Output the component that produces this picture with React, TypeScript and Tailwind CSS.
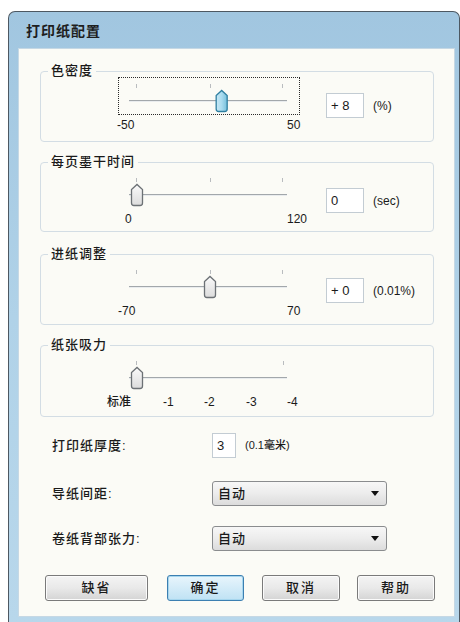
import React from "react";

type Tick = { text: string; x: number };

type SliderProps = {
  min: number;
  max: number;
  value: number;
  ticks: number[];
  labels: Tick[];
  focused?: boolean;
};

const TRACK_START = 18;
const TRACK_SPAN = 146;

const Slider = ({ min, max, value, ticks, labels, focused }: SliderProps) => {
  const cx = TRACK_START + ((value - min) / (max - min)) * TRACK_SPAN;
  const gradId = focused ? "thumbBlue" : "thumbGray";
  return (
    <div className="flex flex-col">
      <div
        className={
          "w-[182px] h-[38px] border " +
          (focused ? "border-dotted border-[#2a2a2a]" : "border-transparent")
        }
      >
        <svg width="180" height="36" viewBox="0 0 180 36">
          <defs>
            <linearGradient id="thumbBlue" x1="0" y1="0" x2="1" y2="0">
              <stop offset="0" stopColor="#c8e9f6" />
              <stop offset="0.5" stopColor="#a9dbef" />
              <stop offset="1" stopColor="#76c0dc" />
            </linearGradient>
            <linearGradient id="thumbGray" x1="0" y1="0" x2="0" y2="1">
              <stop offset="0" stopColor="#fafafa" />
              <stop offset="1" stopColor="#dcdcdc" />
            </linearGradient>
          </defs>
          {ticks.map((t) => (
            <line key={t} x1={t - 0.5} x2={t - 0.5} y1="6" y2="10" stroke="#b9bcbf" strokeWidth="1" />
          ))}
          <line x1="10" x2="168" y1="22.5" y2="22.5" stroke="#a2a7ab" strokeWidth="1" />
          <line x1="10" x2="168" y1="23.5" y2="23.5" stroke="#e9ecee" strokeWidth="1" />
          <path
            d={`M${cx - 5.5},19 L${cx - 5.5},17.5 L${cx},12.5 L${cx + 5.5},17.5 L${cx + 5.5},31 Q${cx + 5.5},33.5 ${cx + 3},33.5 L${cx - 3},33.5 Q${cx - 5.5},33.5 ${cx - 5.5},31 Z`}
            fill={`url(#${gradId})`}
            stroke={focused ? "#2f7fa0" : "#6c7175"}
            strokeWidth="1.3"
          />
        </svg>
      </div>
      <div className="relative h-[15px] mt-[3px] text-[12px] leading-[15px]">
        {labels.map((l) => (
          <span key={l.text} className="absolute top-0 whitespace-nowrap" style={{ left: l.x }}>
            {l.text}
          </span>
        ))}
      </div>
    </div>
  );
};

const GroupBox = ({
  title,
  className,
  children,
}: {
  title: string;
  className: string;
  children: React.ReactNode;
}) => (
  <div
    className={
      "relative ml-[21px] w-[394px] rounded-[4px] border border-[#d3dde4] " + className
    }
  >
    <span className="absolute left-[7px] top-[-10px] bg-[#fbfbf6] px-[3px] text-[13px] leading-[18px] tracking-[1px]">
      {title}
    </span>
    {children}
  </div>
);

const ValueBox = ({ value, unit, mt }: { value: string; unit: string; mt: string }) => (
  <div className={"flex items-center ml-[26px] " + mt}>
    <div className="w-[38px] h-[25px] bg-white border border-[#c3ccd3] pl-[4px] text-[13px] leading-[23px]">
      {value}
    </div>
    <span className="ml-[9px] text-[12px]">{unit}</span>
  </div>
);

const Select = () => (
  <div className="w-[175px] h-[25px] rounded-[3px] border border-[#8a8c8e] bg-gradient-to-b from-[#f7f7f7] via-[#ececec] to-[#dcdcdc] flex items-center justify-between pl-[5px] pr-[7px] text-[13px]">
    <span className="tracking-[1px]">自动</span>
    <svg width="8" height="5" viewBox="0 0 8 5">
      <path d="M0,0 L8,0 L4,5 Z" fill="#111" />
    </svg>
  </div>
);

const Button = ({ text, w, primary }: { text: string; w: string; primary?: boolean }) => (
  <div
    className={
      "h-[26px] rounded-[3px] border flex items-center justify-center text-[13px] tracking-[2px] " +
      w +
      (primary
        ? " border-[#3c7fb1] bg-gradient-to-b from-[#e8f5fc] to-[#bfe2f4] shadow-[inset_0_0_0_1px_#a6d6ee]"
        : " border-[#7a7a7a] bg-gradient-to-b from-[#f4f4f4] via-[#e9e9e9] to-[#d4d4d4] shadow-[inset_0_0_0_1px_#fbfbfb]")
    }
  >
    {text}
  </div>
);

export default function App() {
  return (
    <div className="w-[460px] h-[622px] overflow-hidden bg-white pt-[11px] pl-[8px] text-[#1a1a1a] font-medium font-['Liberation_Sans','Noto_Sans_CJK_SC',sans-serif]">
      <div className="w-[452px] rounded-t-[7px] border border-b-0 border-[#4d5862] bg-gradient-to-b from-[#a1c6e0] via-[#b0d2e8] to-[#b8d7eb]">
        <div className="h-[36px] pl-[17px] flex items-center text-[14px] tracking-[1px] font-['Noto_Sans_CJK_SC',sans-serif] font-semibold text-[#1e1e1e]">
          打印纸配置
        </div>
        <div className="ml-[9px] w-[437px] h-[569px] bg-[#fbfbf6] border border-[#c6d8e4] flex flex-col">
          <GroupBox title="色密度" className="mt-[22px] h-[71px]">
            <div className="flex items-start">
              <div className="ml-[77px] mt-[5px]">
                <Slider
                  min={-50}
                  max={50}
                  value={8}
                  focused
                  ticks={[18, 92, 164]}
                  labels={[
                    { text: "-50", x: -1 },
                    { text: "50", x: 169 },
                  ]}
                />
              </div>
              <ValueBox value="+ 8" unit="(%)" mt="mt-[21px]" />
            </div>
          </GroupBox>

          <GroupBox title="每页墨干时间" className="mt-[20px] h-[70px]">
            <div className="flex items-start">
              <div className="ml-[77px] mt-[8px]">
                <Slider
                  min={0}
                  max={120}
                  value={0}
                  ticks={[18, 92, 164]}
                  labels={[
                    { text: "0", x: 7 },
                    { text: "120", x: 169 },
                  ]}
                />
              </div>
              <ValueBox value="0" unit="(sec)" mt="mt-[25px]" />
            </div>
          </GroupBox>

          <GroupBox title="进纸调整" className="mt-[22px] h-[71px]">
            <div className="flex items-start">
              <div className="ml-[77px] mt-[8px]">
                <Slider
                  min={-70}
                  max={70}
                  value={0}
                  ticks={[18, 92, 164]}
                  labels={[
                    { text: "-70", x: 0 },
                    { text: "70", x: 169 },
                  ]}
                />
              </div>
              <ValueBox value="+ 0" unit="(0.01%)" mt="mt-[23px]" />
            </div>
          </GroupBox>

          <GroupBox title="纸张吸力" className="mt-[20px] h-[72px]">
            <div className="ml-[77px] mt-[8px]">
              <Slider
                min={0}
                max={4}
                value={0}
                ticks={[18, 165]}
                labels={[
                  { text: "标准", x: -11 },
                  { text: "-1", x: 45 },
                  { text: "-2", x: 86 },
                  { text: "-3", x: 128 },
                  { text: "-4", x: 169 },
                ]}
              />
            </div>
          </GroupBox>

          <div className="flex items-center mt-[16px] ml-[33px] text-[13px]">
            <span className="w-[160px] tracking-[1px]">打印纸厚度:</span>
            <div className="w-[24px] h-[25px] bg-white border border-[#c3ccd3] pl-[4px] leading-[23px]">
              3
            </div>
            <span className="ml-[9px] text-[11px]">(0.1毫米)</span>
          </div>

          <div className="flex items-center mt-[23px] ml-[33px] text-[13px]">
            <span className="w-[160px] tracking-[1px]">导纸间距:</span>
            <Select />
          </div>

          <div className="flex items-center mt-[20px] ml-[33px] text-[13px]">
            <span className="w-[160px] tracking-[1px]">卷纸背部张力:</span>
            <Select />
          </div>

          <div className="flex mt-[24px] ml-[26px]">
            <Button text="缺省" w="w-[103px]" />
            <div className="ml-[19px]">
              <Button text="确定" w="w-[77px]" primary />
            </div>
            <div className="ml-[18px]">
              <Button text="取消" w="w-[78px]" />
            </div>
            <div className="ml-[17px]">
              <Button text="帮助" w="w-[78px]" />
            </div>
          </div>
        </div>
        <div className="h-[6px]" />
      </div>
    </div>
  );
}
